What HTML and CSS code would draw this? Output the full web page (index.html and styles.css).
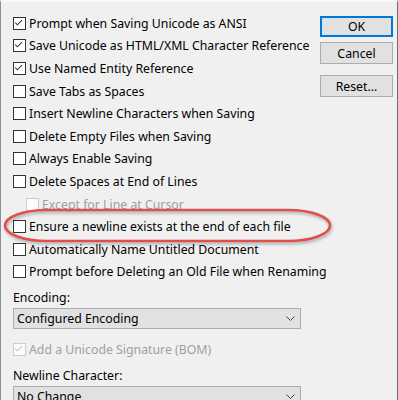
FILE: index.html
```html
<!DOCTYPE html>
<html lang="en">
<head>
    <meta charset="UTF-8">
    <meta name="viewport" content="width=device-width, initial-scale=1.0">
    <title>Save Options</title>
    <link rel="stylesheet" href="styles.css">
</head>
<body>
    <div class="dialog">
        <div class="options">
            <label class="opt"><span class="box checked"><svg viewBox="0 0 13 13"><polyline points="2.5,6.5 5,9 10.5,3.5"/></svg></span>Prompt when Saving Unicode as ANSI</label>
            <label class="opt"><span class="box checked"><svg viewBox="0 0 13 13"><polyline points="2.5,6.5 5,9 10.5,3.5"/></svg></span>Save Unicode as HTML/XML Character Reference</label>
            <label class="opt"><span class="box checked"><svg viewBox="0 0 13 13"><polyline points="2.5,6.5 5,9 10.5,3.5"/></svg></span>Use Named Entity Reference</label>
            <label class="opt"><span class="box"></span>Save Tabs as Spaces</label>
            <label class="opt"><span class="box"></span>Insert Newline Characters when Saving</label>
            <label class="opt"><span class="box"></span>Delete Empty Files when Saving</label>
            <label class="opt"><span class="box"></span>Always Enable Saving</label>
            <label class="opt"><span class="box"></span>Delete Spaces at End of Lines</label>
            <label class="opt sub disabled"><span class="box"></span>Except for Line at Cursor</label>
            <label class="opt"><span class="box"></span>Ensure a newline exists at the end of each file</label>
            <label class="opt"><span class="box"></span>Automatically Name Untitled Document</label>
            <label class="opt"><span class="box"></span>Prompt before Deleting an Old File when Renaming</label>

            <div class="field-label">Encoding:</div>
            <div class="select">Configured Encoding<svg class="chev" viewBox="0 0 9 5"><polyline points="0.5,0.5 4.5,4.5 8.5,0.5"/></svg></div>

            <label class="opt disabled bom"><span class="box checked"><svg viewBox="0 0 13 13"><polyline points="2.5,6.5 5,9 10.5,3.5"/></svg></span>Add a Unicode Signature (BOM)</label>

            <div class="field-label newline">Newline Character:</div>
            <div class="select">No Change<svg class="chev" viewBox="0 0 9 5"><polyline points="0.5,0.5 4.5,4.5 8.5,0.5"/></svg></div>
        </div>

        <div class="buttons">
            <button class="btn default">OK</button>
            <button class="btn">Cancel</button>
            <button class="btn reset">Reset...</button>
        </div>

        <!-- red marker drawn over the screenshot -->
        <svg class="marker" viewBox="0 0 330 36">
            <rect x="2" y="2" width="325" height="31" rx="42" ry="15.5"/>
        </svg>
    </div>
</body>
</html>
```

FILE: styles.css
```css
body {
    margin: 0;
    padding: 0;
    background-color: #f0f0f0;
    font-family: "Noto Sans", "Open Sans", sans-serif;
    font-size: 12.3px;
    color: #000;
    overflow: hidden;
}

.dialog {
    position: relative;
    display: flex;
    flex-direction: row;
    align-items: flex-start;
    width: 398px;
    height: 400px;
    border-top: 2px solid #f9f9f9;
    border-left: 1px solid #8a8f96;
    border-right: 1px solid #6d6d6d;
    box-sizing: border-box;
}

.options {
    display: flex;
    flex-direction: column;
    padding-top: 10px;
    padding-left: 12px;
    width: 295px;
    flex-shrink: 0;
}

.options > * {
    flex-shrink: 0;
}

.opt {
    display: flex;
    align-items: center;
    height: 22.6px;
    white-space: nowrap;
}

.box {
    width: 13px;
    height: 13px;
    box-sizing: border-box;
    border: 1px solid #333;
    background: #fff;
    margin-right: 3px;
    flex-shrink: 0;
}

.box svg {
    display: block;
    width: 11px;
    height: 11px;
    margin: 0;
}

.box svg polyline {
    fill: none;
    stroke: #333;
    stroke-width: 1.2;
    transform: translate(-1px, -1px);
}

.sub {
    padding-left: 13px;
}

.disabled {
    color: #a0a0a0;
}

.disabled .box {
    border-color: #cccccc;
    background: #fcfcfc;
}

.disabled .box svg polyline {
    stroke: #c4c4c4;
}

.field-label {
    margin-top: 7px;
    line-height: 16px;
    height: 16px;
}

.select {
    position: relative;
    margin-top: 2px;
    width: 288px;
    height: 21px;
    box-sizing: border-box;
    border: 1px solid #adadad;
    background: #e1e1e1;
    padding-left: 3px;
    line-height: 19px;
}

.chev {
    position: absolute;
    right: 5px;
    top: 7px;
    width: 9px;
    height: 5px;
}

.chev polyline {
    fill: none;
    stroke: #444;
    stroke-width: 1;
}

.bom {
    margin-top: 9px;
}

.newline {
    margin-top: 7px;
}

.buttons {
    display: flex;
    flex-direction: column;
    padding-top: 14px;
    padding-left: 12px;
}

.btn {
    width: 73px;
    height: 22px;
    box-sizing: border-box;
    border: 1px solid #adadad;
    background: #e1e1e1;
    font-family: inherit;
    font-size: inherit;
    color: #000;
    padding: 0;
    margin: 0 0 5px 0;
}

.btn.default {
    height: 21px;
    border: 2px solid #0078d7;
}

.btn.reset {
    margin-top: 6px;
}

.marker {
    position: absolute;
    left: 2px;
    top: 206px;
    width: 330px;
    height: 36px;
    overflow: visible;
    filter: drop-shadow(1px 2px 1.5px rgba(0, 0, 0, 0.3));
}

.marker rect {
    fill: none;
    stroke: #e0504a;
    stroke-width: 2.6;
}
```
